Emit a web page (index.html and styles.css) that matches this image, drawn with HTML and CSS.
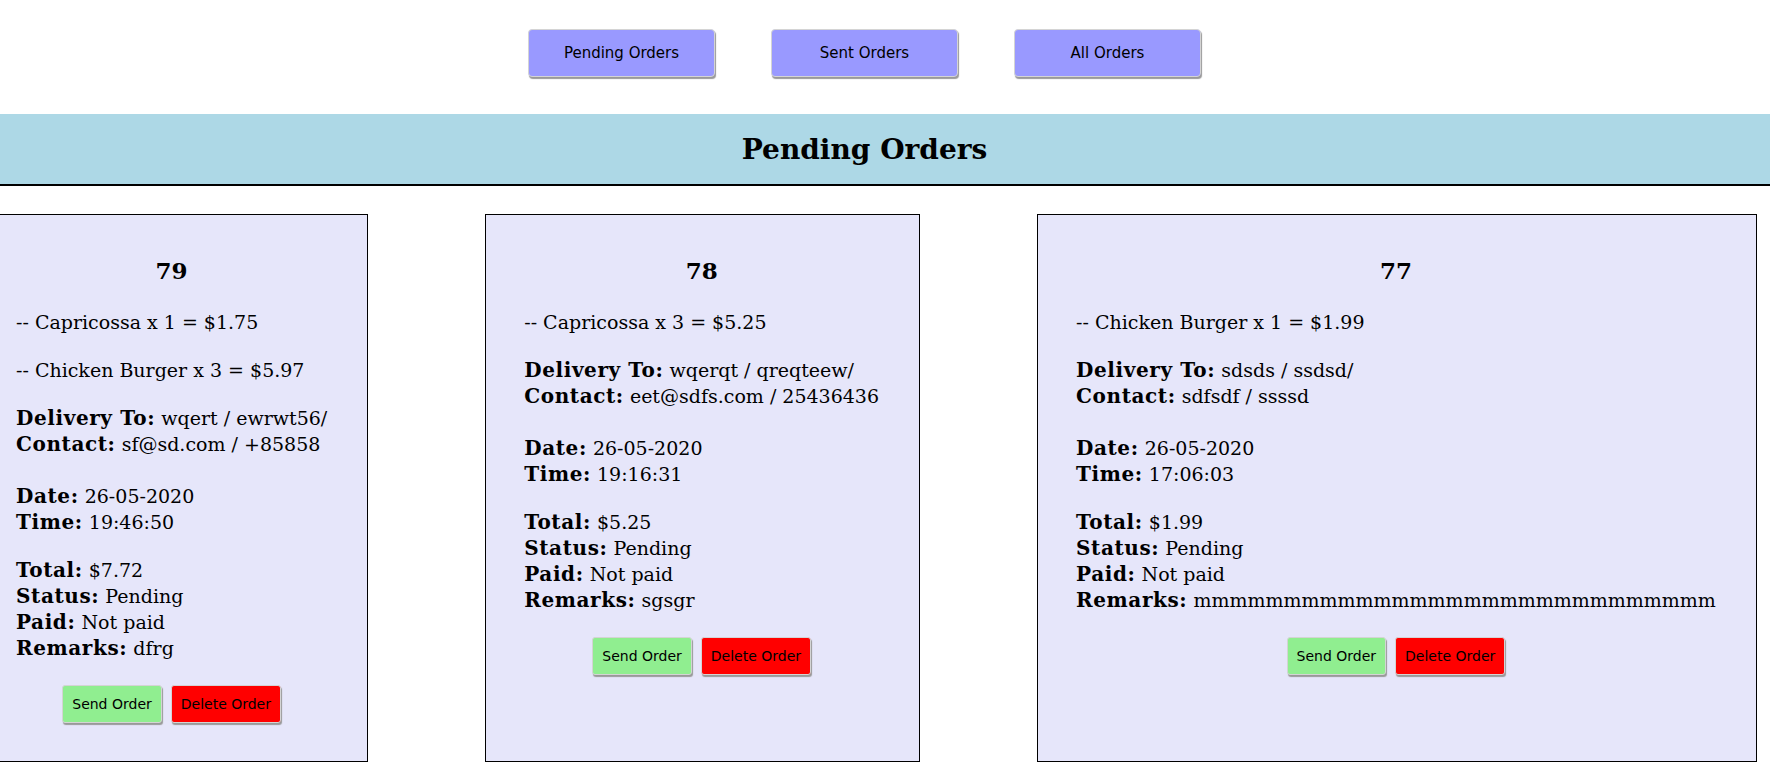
FILE: index.html
```html
<!DOCTYPE html>
<html>
<head>
    <title>Orders</title>
    <link rel="stylesheet" href="styles.css">
</head>
<body>
    <div class="nav">
        <button class="nav-btn">Pending Orders</button>
        <button class="nav-btn">Sent Orders</button>
        <button class="nav-btn">All Orders</button>
    </div>

    <h1 class="banner">Pending Orders</h1>

    <div class="order-list">
        <div class="order">
            <h2>79</h2>
            <p>-- Capricossa x 1 = $1.75</p>
            <p>-- Chicken Burger x 3 = $5.97</p>
            <p><b>Delivery To:</b> wqert / ewrwt56/<br><b>Contact:</b> sf@sd.com / +85858<br><br><b>Date:</b> 26-05-2020<br><b>Time:</b> 19:46:50</p>
            <p><b>Total:</b> $7.72<br><b>Status:</b> Pending<br><b>Paid:</b> Not paid<br><b>Remarks:</b> dfrg</p>
            <div class="actions">
                <button class="send">Send Order</button>
                <button class="delete">Delete Order</button>
            </div>
        </div>

        <div class="order">
            <h2>78</h2>
            <p>-- Capricossa x 3 = $5.25</p>
            <p><b>Delivery To:</b> wqerqt / qreqteew/<br><b>Contact:</b> eet@sdfs.com / 25436436<br><br><b>Date:</b> 26-05-2020<br><b>Time:</b> 19:16:31</p>
            <p><b>Total:</b> $5.25<br><b>Status:</b> Pending<br><b>Paid:</b> Not paid<br><b>Remarks:</b> sgsgr</p>
            <div class="actions">
                <button class="send">Send Order</button>
                <button class="delete">Delete Order</button>
            </div>
        </div>

        <div class="order">
            <h2>77</h2>
            <p>-- Chicken Burger x 1 = $1.99</p>
            <p><b>Delivery To:</b> sdsds / ssdsd/<br><b>Contact:</b> sdfsdf / ssssd<br><br><b>Date:</b> 26-05-2020<br><b>Time:</b> 17:06:03</p>
            <p><b>Total:</b> $1.99<br><b>Status:</b> Pending<br><b>Paid:</b> Not paid<br><b>Remarks:</b> mmmmmmmmmmmmmmmmmmmmmmmmmmmmm</p>
            <div class="actions">
                <button class="send">Send Order</button>
                <button class="delete">Delete Order</button>
            </div>
        </div>
    </div>
</body>
</html>
```

FILE: styles.css
```css
body {
    margin: 0;
    font-family: "DejaVu Serif", Georgia, serif;
    background-color: white;
    overflow: hidden;
}
.nav {
    display: flex;
    justify-content: center;
    gap: 56px;
    padding: 29px 41px 0 0;
    height: 114px;
    box-sizing: border-box;
}
.nav-btn {
    width: 187px;
    height: 48px;
    background-color: #9999ff;
    border: 1px solid #d4d4d4;
    border-radius: 4px;
    box-shadow: 1px 2px 1px #999;
    font-family: "DejaVu Sans", Tahoma, sans-serif;
    font-size: 15px;
    color: black;
}
.banner {
    margin: 0;
    height: 72px;
    line-height: 72px;
    padding-right: 41px;
    box-sizing: border-box;
    background-color: lightblue;
    border-bottom: 2px solid black;
    text-align: center;
    font-size: 28px;
}
.order-list {
    display: flex;
    gap: 117px;
    margin: 28px 0 0 -23px;
    height: 548px;
}
.order {
    flex: none;
    background-color: lavender;
    border: 1px solid black;
    padding: 33px 40px 0 38px;
    font-size: 19px;
    line-height: 26px;
}
.order b {
    font-size: 20px;
    letter-spacing: 0.6px;
}
.order h2 {
    text-align: center;
    font-size: 23px;
    margin: 10px 0 25px;
}
.order p {
    margin: 22px 0;
    white-space: nowrap;
}
.actions {
    display: flex;
    justify-content: center;
    gap: 9px;
    margin-top: 24px;
}
.actions button {
    height: 38px;
    padding: 0 9px;
    border: 1px solid #d4d4d4;
    border-radius: 3px;
    box-shadow: 1px 2px 1px #999;
    font-family: "DejaVu Sans", Tahoma, sans-serif;
    font-size: 14px;
    color: black;
}
.send {
    background-color: lightgreen;
}
.delete {
    background-color: red;
}
```
